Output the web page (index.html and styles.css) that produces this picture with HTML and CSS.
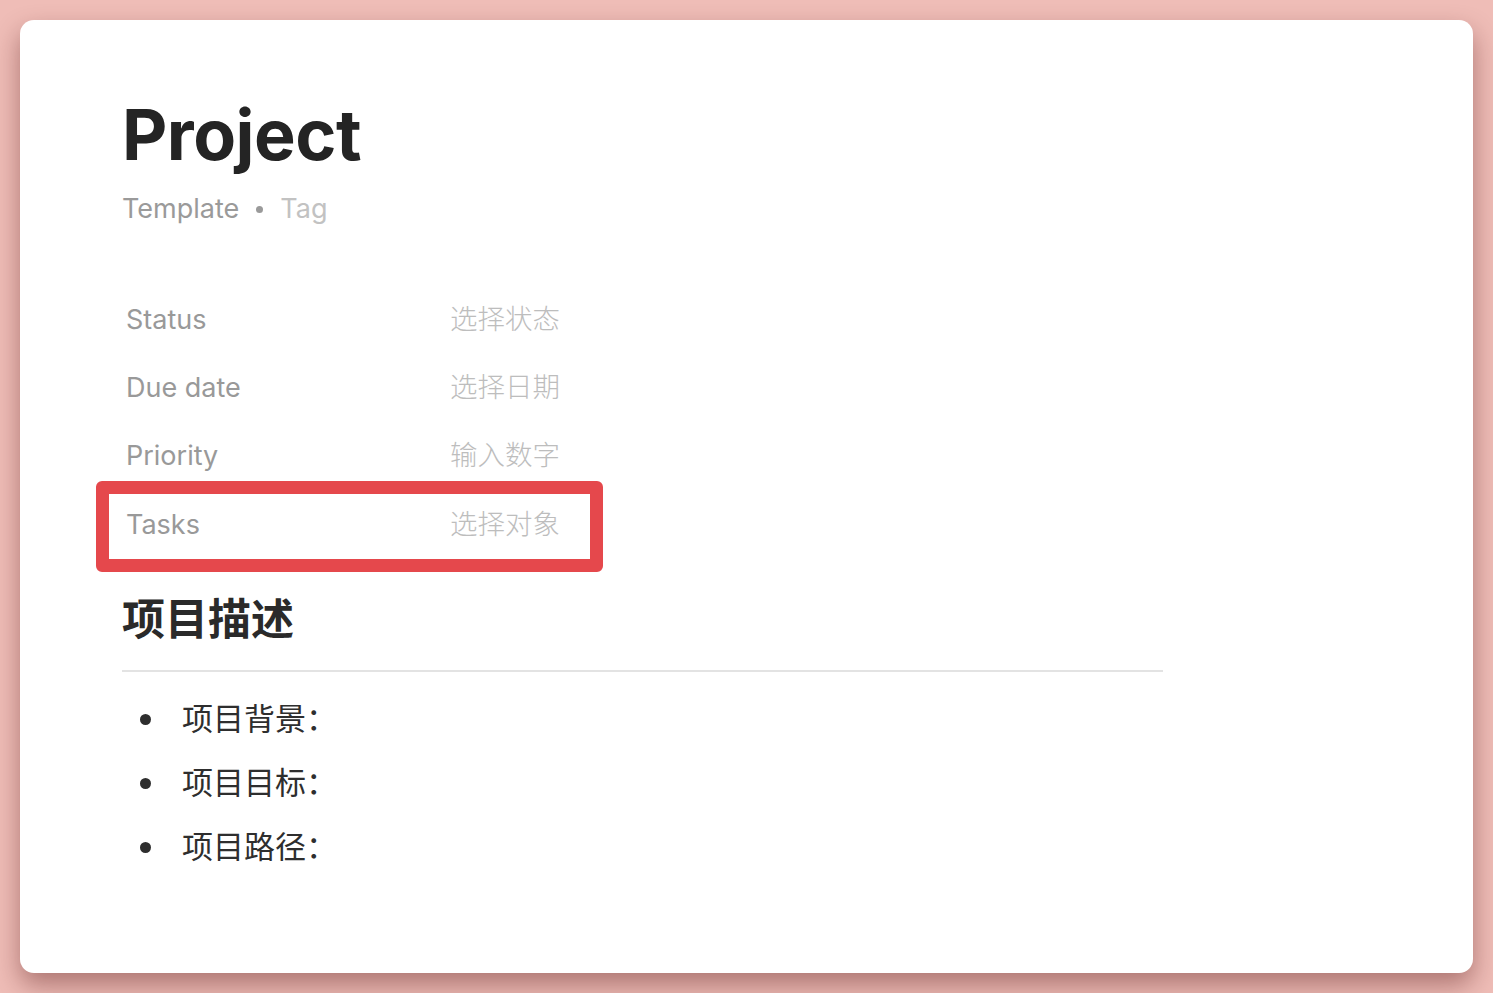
FILE: index.html
```html
<!DOCTYPE html>
<html lang="zh">
<head>
<meta charset="utf-8">
<title>Project</title>
<link rel="stylesheet" href="styles.css">
</head>
<body>
<main class="card">
  <h1 class="title">Project</h1>
  <div class="meta">
    <span class="meta-template">Template</span>
    <span class="meta-dot"></span>
    <span class="meta-tag">Tag</span>
  </div>
  <div class="props">
    <div class="prop"><span class="prop-label">Status</span><span class="prop-value">选择状态</span></div>
    <div class="prop"><span class="prop-label">Due date</span><span class="prop-value">选择日期</span></div>
    <div class="prop"><span class="prop-label">Priority</span><span class="prop-value">输入数字</span></div>
    <div class="prop prop-highlight"><span class="prop-label">Tasks</span><span class="prop-value">选择对象</span></div>
  </div>
  <h2 class="section-title">项目描述</h2>
  <hr class="divider">
  <ul class="list">
    <li class="list-item"><span class="bullet"></span><span>项目背景：</span></li>
    <li class="list-item"><span class="bullet"></span><span>项目目标：</span></li>
    <li class="list-item"><span class="bullet"></span><span>项目路径：</span></li>
  </ul>
</main>
</body>
</html>
```
FILE: styles.css
```css
html, body {
  margin: 0;
  padding: 0;
}
body {
  background: #efbdb7;
  font-family: Inter, "Noto Sans CJK SC", sans-serif;
  width: 1493px;
  height: 993px;
  overflow: hidden;
  padding: 20px;
  box-sizing: border-box;
}
.card {
  background: #ffffff;
  border-radius: 14px;
  height: 953px;
  box-sizing: border-box;
  padding: 73px 0 0 102px;
  box-shadow: 0 12px 26px rgba(80, 20, 20, 0.42);
}
.title {
  margin: 0;
  font-size: 70px;
  font-weight: 700;
  color: #242424;
  line-height: 84px;
  letter-spacing: -0.5px;
}
.meta {
  display: flex;
  align-items: center;
  gap: 17px;
  margin-top: 16px;
  font-size: 27px;
  line-height: 32px;
}
.meta-template { color: #9a9a9a; }
.meta-tag { color: #c2c2c2; }
.meta-dot {
  width: 7px;
  height: 7px;
  border-radius: 50%;
  background: #9a9a9a;
}
.props {
  margin-top: 60px;
  display: flex;
  flex-direction: column;
  width: 480px;
}
.prop {
  display: flex;
  align-items: center;
  height: 68px;
  padding-left: 4px;
  box-sizing: border-box;
}
.prop-label {
  width: 324px;
  font-size: 27px;
  color: #999999;
}
.prop-value {
  font-size: 27.5px;
  color: #bdbdbd;
  font-weight: 300;
  margin-bottom: 4px;
}
.prop-highlight {
  margin-left: -26px;
  padding-left: 17px;
  padding-bottom: 5px;
  width: 507px;
  height: 91px;
  margin-top: -8px;
  border: 13px solid #e5484c;
  border-radius: 6px;
}
.section-title {
  margin: 17px 0 0;
  font-size: 43px;
  font-weight: 700;
  color: #2a2a2a;
  line-height: 60px;
}
.divider {
  margin: 21px 0 0 0;
  width: 1041px;
  border: 0;
  height: 2px;
  background: #e3e3e3;
}
.list {
  margin: 15px 0 0;
  padding: 0 0 0 18px;
  list-style: none;
  font-size: 31px;
  color: #2e2e2e;
  line-height: 64px;
}
.list-item {
  display: flex;
  align-items: center;
  gap: 31px;
}
.bullet {
  width: 11px;
  height: 11px;
  border-radius: 50%;
  background: #2e2e2e;
  flex: none;
}
```
